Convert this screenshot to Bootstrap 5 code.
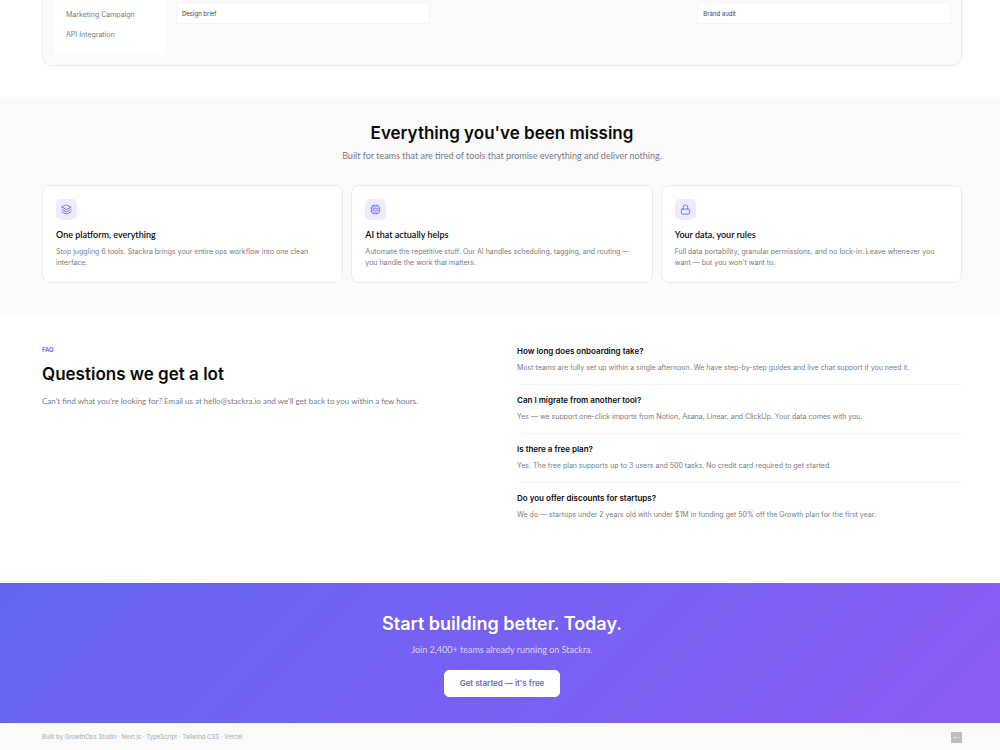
<!DOCTYPE html>
<html lang="en">
<head>
<meta charset="utf-8">
<meta name="viewport" content="width=device-width, initial-scale=1">
<title>Stackra</title>
<link href="https://cdn.jsdelivr.net/npm/bootstrap@5.3.0/dist/css/bootstrap.min.css" rel="stylesheet">
<style>
:root { --ink: #0a0a0a; --muted: #777b84; --line: #ebebeb; --accent: #6366f1; --soft: #fafafa; }
body { font-family: Inter, sans-serif; font-size: 7px; line-height: 12px; color: var(--muted); background: #fff; }
.shell { padding-left: 42px; padding-right: 38px; }
.soft { background: var(--soft); }
.intro { font-family: Lato, sans-serif; font-size: 9px; line-height: 14px; }
.intro-sm { font-size: 8px; }
.headline { font-size: 17px; line-height: 24px; font-weight: 600; color: var(--ink); margin: 0; }

/* Product preview */
.preview-wrap { padding-bottom: 31px; }
.preview { border: 1px solid var(--line); border-top: 0; border-radius: 0 0 9px 9px; padding: 0 10px 11px 11px; gap: 9px; }
.side { width: 113px; height: 54px; padding: 9px 12px; background: #fff; border-radius: 0 0 4px 4px; gap: 8px; }
.board { display: grid; grid-template-columns: repeat(3, 1fr); gap: 7px; padding-top: 3px; }
.task { background: #fff; border: 1px solid #f5f5f5; border-radius: 3px; font-size: 6px; line-height: 11px; padding: 4px 5px; color: #444; }

/* Features */
.features { padding-top: 24px; padding-bottom: 32px; }
.feature-grid { display: grid; grid-template-columns: repeat(3, 1fr); gap: 8px; margin-top: 22px; }
.feature { border: 1px solid var(--line); border-radius: 8px; background: #fff; padding: 13px 13px 14px; }
.feature-icon { width: 21px; height: 21px; border-radius: 5px; background: #eeebfe; color: var(--accent); }
.feature-icon svg, .mark-box svg { fill: none; stroke: currentColor; stroke-width: 1.8; stroke-linecap: round; stroke-linejoin: round; }
.feature h3 { font: 600 9px/12px Lato, sans-serif; color: var(--ink); margin: 9px 0 5px; }
.feature p { line-height: 11px; margin: 0; }

/* FAQ */
.faq { display: grid; grid-template-columns: 1fr 1fr; gap: 30px; padding-top: 30px; padding-bottom: 52px; }
.eyebrow { font-size: 6px; line-height: 10px; font-weight: 600; color: var(--accent); margin: 0 0 7px; }
.faq dt { font-size: 8px; line-height: 12px; font-weight: 600; color: var(--ink); margin-bottom: 5px; }
.faq-item { padding: 9px 0 10px; border-bottom: 1px solid #f5f5f5; }
.faq-item:first-child { padding-top: 0; }
.faq-item:last-child { border-bottom: 0; }

/* Call to action */
.cta { background: linear-gradient(135deg, #6366f1, #8b5cf6); padding-top: 28px; padding-bottom: 26px; color: #fff; }
.cta .headline { font-size: 18px; line-height: 26px; color: #fff; }
.cta .intro { color: #d9d4fd; margin: 6px 0 13px; }
.btn-start { --bs-btn-padding-x: 15px; --bs-btn-padding-y: 7px; --bs-btn-font-size: 8px; --bs-btn-font-weight: 600; --bs-btn-line-height: 11px; --bs-btn-border-radius: 5px; --bs-btn-bg: #fff; --bs-btn-color: var(--accent); --bs-btn-border-color: #fff; --bs-btn-hover-bg: #f3f2ff; --bs-btn-hover-color: var(--accent); }

footer { font-size: 6px; line-height: 12px; color: #a5a7ac; padding-top: 8px; padding-bottom: 7px; }
.mark-box { width: 11px; height: 11px; background: #bcbcbc; color: #eee; }
</style>
</head>
<body>
<main>
  <section class="shell preview-wrap">
    <div class="preview soft d-flex">
      <div class="side d-flex flex-column flex-shrink-0">
        <span>Marketing Campaign</span>
        <span>API Integration</span>
      </div>
      <div class="board flex-grow-1 align-items-start">
        <div><div class="task">Design brief</div></div>
        <div></div>
        <div><div class="task">Brand audit</div></div>
      </div>
    </div>
  </section>

  <section class="soft shell features">
    <div class="text-center">
      <h2 class="headline">Everything you've been missing</h2>
      <p class="intro mt-1 mb-0">Built for teams that are tired of tools that promise everything and deliver nothing.</p>
    </div>
    <div class="feature-grid">
      <article class="feature">
        <div class="feature-icon d-flex align-items-center justify-content-center">
          <svg width="11" height="11" viewBox="0 0 24 24" aria-hidden="true"><path d="M12 2 22 7 12 12 2 7Z"/><path d="m2 12 10 5 10-5"/><path d="m2 17 10 5 10-5"/></svg>
        </div>
        <h3>One platform, everything</h3>
        <p>Stop juggling 6 tools. Stackra brings your entire ops workflow into one clean interface.</p>
      </article>
      <article class="feature">
        <div class="feature-icon d-flex align-items-center justify-content-center">
          <svg width="11" height="11" viewBox="0 0 24 24" aria-hidden="true"><rect x="4" y="4" width="16" height="16" rx="2"/><rect x="8" y="9" width="8" height="6" rx="1"/><path d="M9 2v2M15 2v2M9 20v2M15 20v2M20 9h2M20 15h2M2 9h2M2 15h2"/></svg>
        </div>
        <h3>AI that actually helps</h3>
        <p>Automate the repetitive stuff. Our AI handles scheduling, tagging, and routing — you handle the work that matters.</p>
      </article>
      <article class="feature">
        <div class="feature-icon d-flex align-items-center justify-content-center">
          <svg width="11" height="11" viewBox="0 0 24 24" aria-hidden="true"><rect x="3" y="11" width="18" height="11" rx="2"/><path d="M7 11V7a5 5 0 0 1 10 0v4"/></svg>
        </div>
        <h3>Your data, your rules</h3>
        <p>Full data portability, granular permissions, and no lock-in. Leave whenever you want — but you won't want to.</p>
      </article>
    </div>
  </section>

  <section class="shell faq">
    <div>
      <p class="eyebrow">FAQ</p>
      <h2 class="headline">Questions we get a lot</h2>
      <p class="intro intro-sm mt-2 mb-0">Can't find what you're looking for? Email us at hello@stackra.io and we'll get back to you within a few hours.</p>
    </div>
    <dl class="mb-0">
      <div class="faq-item"><dt>How long does onboarding take?</dt><dd class="mb-0">Most teams are fully set up within a single afternoon. We have step-by-step guides and live chat support if you need it.</dd></div>
      <div class="faq-item"><dt>Can I migrate from another tool?</dt><dd class="mb-0">Yes — we support one-click imports from Notion, Asana, Linear, and ClickUp. Your data comes with you.</dd></div>
      <div class="faq-item"><dt>Is there a free plan?</dt><dd class="mb-0">Yes. The free plan supports up to 3 users and 500 tasks. No credit card required to get started.</dd></div>
      <div class="faq-item"><dt>Do you offer discounts for startups?</dt><dd class="mb-0">We do — startups under 2 years old with under $1M in funding get 50% off the Growth plan for the first year.</dd></div>
    </dl>
  </section>

  <section class="shell cta text-center">
    <h2 class="headline">Start building better. Today.</h2>
    <p class="intro">Join 2,400+ teams already running on Stackra.</p>
    <button type="button" class="btn btn-start">Get started — it's free</button>
  </section>
</main>
<footer class="shell soft d-flex justify-content-between align-items-center">
  <span>Built by GrowthOps Studio · Next.js · TypeScript · Tailwind CSS · Vercel</span>
  <span class="mark-box d-flex align-items-center justify-content-center"><svg width="7" height="7" viewBox="0 0 24 24" aria-hidden="true"><path d="M3 12h18M9 6l-6 6 6 6"/></svg></span>
</footer>
<script src="https://cdn.jsdelivr.net/npm/bootstrap@5.3.0/dist/js/bootstrap.bundle.min.js"></script>
</body>
</html>
